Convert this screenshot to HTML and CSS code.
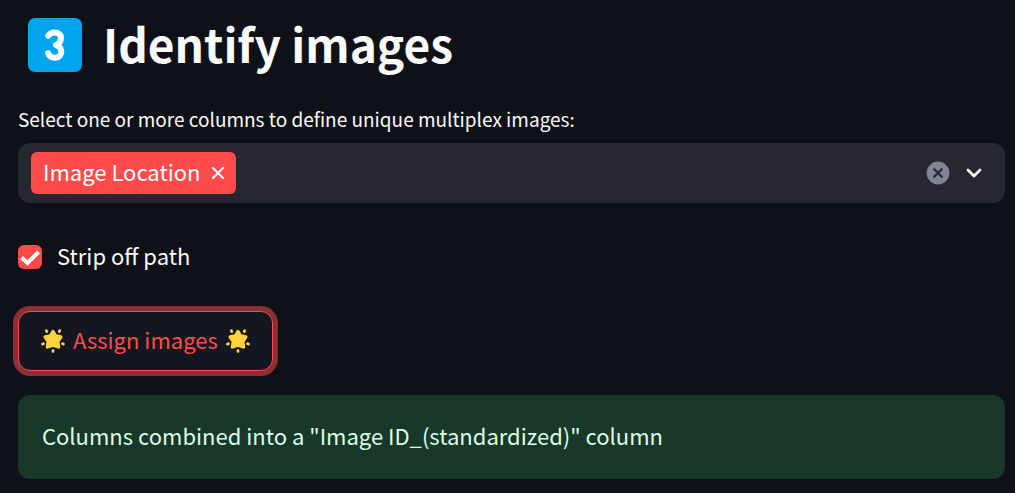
FILE: index.html
```html
<!DOCTYPE html>
<html lang="en">
<head>
<meta charset="utf-8">
<title>Identify images</title>
<link rel="stylesheet" href="styles.css">
</head>
<body>
<svg class="defs" aria-hidden="true">
  <symbol id="glow" viewBox="0 0 24 24">
    <path d="M12 2.6 L14.5 6.8 L19.8 8 L16.7 12.5 L17.6 18 L12 16.2 L6.4 18 L7.3 12.5 L4.2 8 L9.5 6.8 Z" fill="#ffd43b" stroke="#ffd43b" stroke-width="3.4" stroke-linejoin="round"/>
    <g stroke="#ffd43b" stroke-width="2.8" stroke-linecap="round">
      <path d="M5.3 1.6 L5.8 2.5M18.7 1.6 L18.2 2.5M1.6 15.1 L2.4 14.7M22.4 15.1 L21.6 14.7M12 21.6 V22.4"/>
    </g>
  </symbol>
</svg>
<main class="page">
  <h1 class="heading">
    <svg class="keycap" viewBox="0 0 54 54" role="img" aria-label="Step three">
      <rect width="54" height="54" rx="7" fill="#00a4ef"/>
      <path d="M20.3 17.8C22 15 24.3 14.4 26.6 14.4C30.6 14.4 33 16.7 33 20C33 23.4 31 25.8 28 27C31.3 28.2 33.3 30.5 33.3 33.8C33.3 37.3 30.8 39.8 26.8 39.8C23.3 39.8 21 38 20.2 35.2" fill="none" stroke="#fff" stroke-width="6" stroke-linecap="round" stroke-linejoin="round"/>
    </svg>
    <span class="text">Identify images</span>
  </h1>

  <div class="field">
    <label class="field-label" for="columns">Select one or more columns to define unique multiplex images:</label>
    <div class="multiselect">
      <span class="tag"><span class="text">Image Location</span>
        <button class="icon-button" type="button" aria-label="Remove Image Location">
          <svg class="remove" viewBox="0 0 12 12"><path d="M1 1L11 11M11 1L1 11" stroke="#fff" stroke-width="2" stroke-linecap="round"/></svg>
        </button>
      </span>
      <input class="search" id="columns" type="text" autocomplete="off">
      <button class="icon-button" type="button" aria-label="Clear all">
        <svg class="clear" viewBox="0 0 24 24"><circle cx="12" cy="12" r="11.4" fill="#808495"/><path d="M8.2 8.2L15.8 15.8M15.8 8.2L8.2 15.8" stroke="#262730" stroke-width="2.2" stroke-linecap="round"/></svg>
      </button>
      <button class="icon-button" type="button" aria-label="Open options">
        <svg class="chevron" viewBox="0 0 16 10"><path d="M2 2L8 8L14 2" fill="none" stroke="#fafafa" stroke-width="2.8" stroke-linecap="round" stroke-linejoin="round"/></svg>
      </button>
    </div>
  </div>

  <label class="check"><input class="check-box" type="checkbox" checked><span class="text">Strip off path</span></label>

  <button class="assign" type="button">
    <svg class="star"><use href="#glow"/></svg>
    <span class="text">Assign images</span>
    <svg class="star"><use href="#glow"/></svg>
  </button>

  <div class="alert" role="status">Columns combined into a "Image ID_(standardized)" column</div>
</main>
</body>
</html>
```
FILE: styles.css
```css
* {
  box-sizing: border-box;
}

body {
  margin: 0;
  background: #0e1117;
  color: #fafafa;
  font-family: "Noto Sans CJK SC", "Noto Sans", sans-serif;
  font-size: 22px;
  line-height: 32px;
}

button,
input {
  font: inherit;
  color: inherit;
}

.defs {
  position: absolute;
  width: 0;
  height: 0;
}

.page {
  display: flex;
  flex-direction: column;
  align-items: flex-start;
  padding: 10px 10px 14px 18px;
}

.text {
  padding-bottom: 4px;
}

.heading {
  display: flex;
  align-items: center;
  gap: 21px;
  margin: 0 0 24px;
  padding-left: 10px;
  font-size: 46px;
  font-weight: 700;
  line-height: 66px;
}

.keycap {
  width: 54px;
  height: 54px;
}

.field {
  display: flex;
  flex-direction: column;
  gap: 9px;
  width: 100%;
}

.field-label {
  font-size: 19px;
  line-height: 30px;
}

.multiselect {
  display: flex;
  align-items: center;
  gap: 16px;
  min-height: 60px;
  padding: 9px 23px 9px 13px;
  border-radius: 12px;
  background: #262730;
}

.tag {
  display: flex;
  align-items: center;
  gap: 11px;
  height: 42px;
  padding: 0 12px;
  border-radius: 6px;
  background: #ff4b4b;
  color: #fff;
  white-space: nowrap;
}

.search {
  flex: 1;
  min-width: 0;
  border: 0;
  outline: 0;
  background: transparent;
}

.icon-button {
  display: flex;
  padding: 0;
  border: 0;
  background: none;
  cursor: pointer;
}

.remove {
  width: 12px;
  height: 12px;
}

.clear {
  width: 24px;
  height: 24px;
}

.chevron {
  width: 16px;
  height: 10px;
}

.check {
  display: flex;
  align-items: center;
  gap: 15px;
  margin-top: 36px;
}

.check-box {
  appearance: none;
  width: 24px;
  height: 24px;
  margin: 0;
  border-radius: 6px;
  background: #ff4b4b url("data:image/svg+xml,%3Csvg xmlns='http://www.w3.org/2000/svg' viewBox='0 0 24 24'%3E%3Cpath d='M3.5 12.5L9.5 18L20.5 7' fill='none' stroke='%23fafafa' stroke-width='4'/%3E%3C/svg%3E");
}

.check-box:not(:checked) {
  background: #262730;
}

.assign {
  display: flex;
  align-items: center;
  gap: 8px;
  min-height: 60px;
  margin-top: 36px;
  padding: 0 22px;
  border: 1px solid #ff4b4b;
  border-radius: 12px;
  background: #131720;
  box-shadow: 0 0 0 5px #8b2f33;
  color: #ff4b4b;
}

.star {
  width: 24px;
  height: 24px;
}

.alert {
  width: 100%;
  margin-top: 24px;
  padding: 24px 24px 28px;
  border-radius: 12px;
  background: #183929;
  color: #dffde9;
}
```
